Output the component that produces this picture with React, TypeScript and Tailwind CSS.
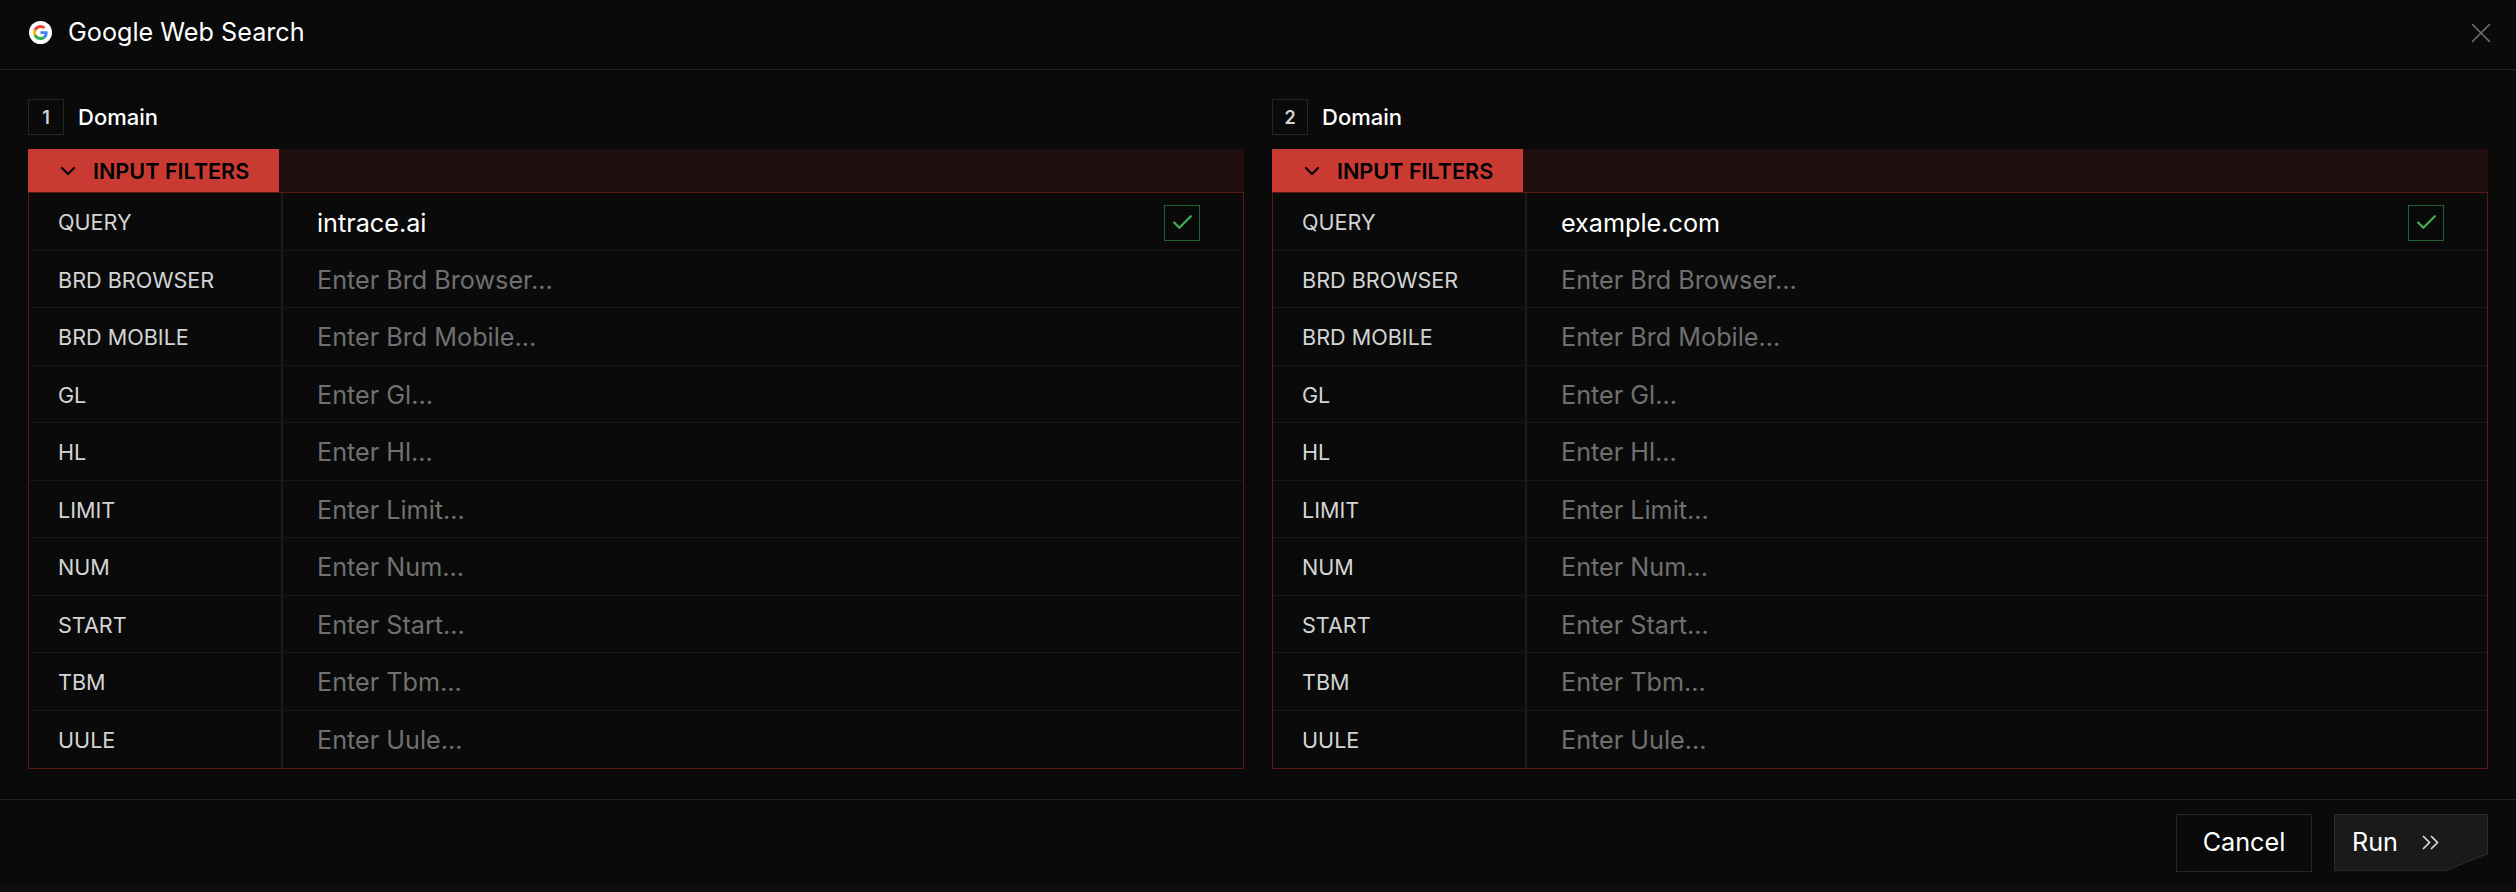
import React from "react";
import { ChevronDown, Check, X } from "lucide-react";

const rows = ["BRD BROWSER:Brd Browser", "BRD MOBILE:Brd Mobile", "GL:Gl", "HL:Hl", "LIMIT:Limit", "NUM:Num", "START:Start", "TBM:Tbm", "UULE:Uule"];

function GoogleLogo() {
  return (
    <span className="flex h-[23px] w-[23px] items-center justify-center rounded-full bg-white">
      <svg viewBox="0 0 48 48" className="h-[15px] w-[15px]">
        <path fill="#EA4335" d="M24 9.5c3.5 0 6.7 1.2 9.2 3.6l6.9-6.9C35.9 2.4 30.5 0 24 0 14.6 0 6.5 5.4 2.6 13.2l8 6.2C12.5 13.7 17.8 9.5 24 9.5z" />
        <path fill="#4285F4" d="M46.9 24.5c0-1.6-.1-3.1-.4-4.5H24v9h12.9c-.6 3-2.2 5.5-4.8 7.2l7.7 6c4.5-4.2 7.1-10.3 7.1-17.7z" />
        <path fill="#FBBC05" d="M10.5 28.6c-.5-1.4-.8-3-.8-4.6s.3-3.2.8-4.6l-8-6.2C.9 16.5 0 20.1 0 24s.9 7.5 2.6 10.8l7.9-6.2z" />
        <path fill="#34A853" d="M24 48c6.5 0 11.9-2.1 15.9-5.8l-7.7-6c-2.2 1.4-4.9 2.3-8.2 2.3-6.2 0-11.5-4.2-13.4-9.9l-8 6.2C6.5 42.6 14.6 48 24 48z" />
      </svg>
    </span>
  );
}

function Panel({ n, value }: { n: number; value: string }) {
  return (
    <div className="flex flex-1 flex-col">
      <div className="flex h-9 items-center gap-[14px]">
        <span className="flex h-9 w-9 items-center justify-center border border-[#262626] text-[18px] font-semibold text-[#d4d4d4]">{n}</span>
        <span className="pt-[1px] text-[22px] font-medium text-white">Domain</span>
      </div>
      <div className="mt-[14px] flex h-[43px] bg-[#1f0e0d]">
        <div className="flex w-[250.5px] items-center bg-[#c93a33] pl-[28px] text-black">
          <ChevronDown className="h-6 w-6" strokeWidth={2} />
          <span className="ml-[13px] pt-[2px] text-[21.6px] font-semibold">INPUT FILTERS</span>
        </div>
      </div>
      <div className="flex flex-col border-[1.5px] border-[#5c1a17]">
        <div className="flex h-[57.5px] border-b border-[#171717]">
          <div className="flex w-[254px] items-center border-r-2 border-[#1c1c1c] pl-[29px] pt-[2px] text-[21.6px] text-[#d4d4d4]">QUERY</div>
          <div className="flex flex-1 items-center justify-between pl-[34px] pr-[43px] pt-[3px]">
            <span className="pt-[2px] text-[25.2px] text-white">{value}</span>
            <span className="flex h-9 w-9 items-center justify-center border border-[#1f5f30]">
              <Check className="h-[25px] w-[25px] text-[#3fae55]" strokeWidth={2.2} />
            </span>
          </div>
        </div>
        {rows.map((r, i) => {
          const [label, name] = r.split(":");
          return (
            <div key={label} className={"flex h-[57.5px] " + (i < rows.length - 1 ? "border-b border-[#171717]" : "")}>
              <div className="flex w-[254px] items-center border-r-2 border-[#1c1c1c] pl-[29px] pt-[2px] text-[21.6px] text-[#d4d4d4]">{label}</div>
              <div className="flex flex-1 items-center pl-[34px] pt-[4px] text-[25.2px] text-[#707070]">Enter {name}...</div>
            </div>
          );
        })}
      </div>
    </div>
  );
}

export default function App() {
  return (
    <div className="flex h-[892px] w-[2516px] flex-col bg-[#0a0a0a]" style={{ fontFamily: "Inter, sans-serif" }}>
      <header className="flex h-[70px] items-center justify-between border-b border-[#222222] pb-[3px] pl-[29px] pr-[18px]">
        <div className="flex items-center gap-[16px]">
          <GoogleLogo />
          <span className="text-[25.2px] font-normal text-white">Google Web Search</span>
        </div>
        <X className="h-[34px] w-[34px] text-[#6b6b6b]" strokeWidth={1.2} />
      </header>
      <main className="flex gap-7 px-7 pt-[29px]">
        <Panel n={1} value="intrace.ai" />
        <Panel n={2} value="example.com" />
      </main>
      <footer className="mt-[30px] flex h-[86px] items-center justify-end gap-[22px] border-t border-[#222222] pr-7">
        <button className="flex h-[58px] w-[136px] items-center justify-center border border-[#262626] pt-[1px] text-[25.2px] text-white">Cancel</button>
        <span className="h-[57px] w-[154px] bg-[#2a2a2a] p-px [clip-path:polygon(0_0,100%_0,100%_70%,72.8%_100%,0_100%)]">
          <span className="flex h-full w-full items-center bg-[#1a1a1a] pl-[17px] text-[25.2px] text-white [clip-path:polygon(0_0,100%_0,100%_69%,72.8%_100%,0_100%)]">
            Run
            <svg viewBox="0 0 17 15" className="ml-[24px] h-[15px] w-[17px] text-[#d9d9d9]" fill="none" stroke="currentColor" strokeWidth="1.7">
              <path d="M1 1l6.5 6.5L1 14M9 1l6.5 6.5L9 14" />
            </svg>
          </span>
        </span>
      </footer>
      <div className="flex-1 bg-[#0e0e0e]" />
    </div>
  );
}
